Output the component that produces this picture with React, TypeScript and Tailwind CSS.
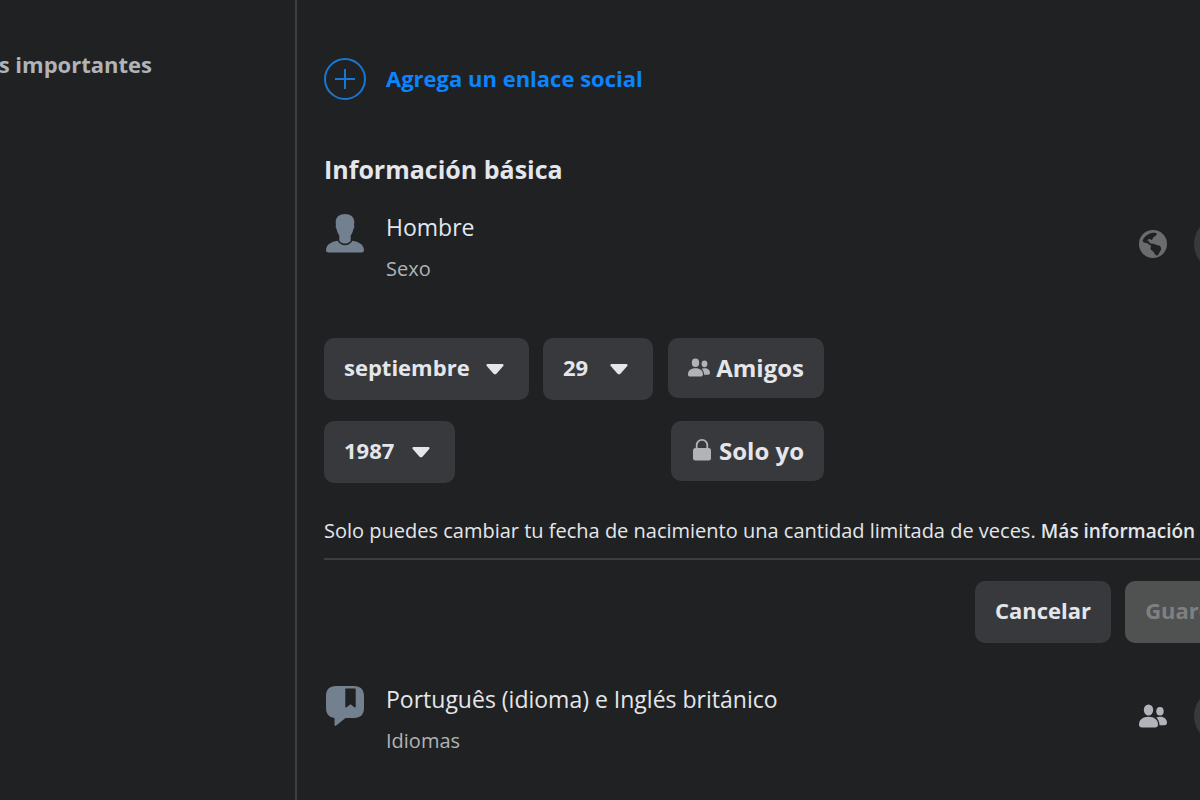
import type { ReactNode } from "react";

function Caret() {
  return (
    <svg
      viewBox="0 0 20 12"
      className="pointer-events-none absolute right-[25px] h-[11px] w-[18px] fill-[#e4e6eb]"
      aria-hidden="true"
    >
      <path d="M1.600 0h16.800c1.100 0 1.500 1.200.8 2l-7.600 8.600c-.9 1-2.300 1-3.200 0L.8 2C.1 1.200.5 0 1.600 0z" />
    </svg>
  );
}

function Picker({ label, value, width }: { label: string; value: string; width: string }) {
  return (
    <div className={`relative flex items-center ${width}`}>
      <select
        aria-label={label}
        defaultValue={value}
        className="h-[62px] w-full appearance-none rounded-[10px] bg-[#38393c] pb-1 pl-5 text-[22px] leading-8 font-bold text-[#e4e6eb]"
      >
        <option>{value}</option>
      </select>
      <Caret />
    </div>
  );
}

function FriendsIcon({ className }: { className: string }) {
  return (
    <svg viewBox="0 0 28 24" className={className} fill="currentColor" aria-hidden="true">
      <ellipse cx="9.500" cy="6" rx="4.700" ry="5.500" />
      <ellipse cx="21" cy="7.300" rx="3.700" ry="4.300" />
      <path d="M0 20.500C0 16 3.500 12.800 9.500 12.800S19 16 19 20.500c0 1.900-1 2.900-3 2.900H3c-2 0-3-1-3-2.900z" />
      <path d="M17.300 13.600c1-.5 2.300-.8 3.800-.8 4.500 0 6.900 2.700 6.900 5.900 0 1.600-.9 2.500-2.500 2.500h-5c-.2-3.300-1.200-5.700-3.200-7.600z" />
    </svg>
  );
}

function LockIcon() {
  return (
    <svg viewBox="0 0 18 22" className="mb-0.5 h-[22px] w-[18px] text-[#b0b3b8]" fill="currentColor" aria-hidden="true">
      <path d="M3.700 10V6.200a5.300 5.300 0 0 1 10.600 0V10" fill="none" stroke="currentColor" strokeWidth="1.800" />
      <rect y="9" width="18" height="12.500" rx="2.500" />
    </svg>
  );
}

function GlobeIcon() {
  return (
    <svg viewBox="0 0 28 28" className="h-7 w-7" aria-hidden="true">
      <circle cx="14" cy="14" r="14" fill="#6b6c6e" />
      <path
        fill="#202122"
        d="M17.300 3.200c-2.600-.8-5.700-.4-8.300 1.200-2.700 1.600-4.700 3.900-5.500 6.400.6 1.700 2.300 2.300 4 2.200 1.300 0 1.700 1.500 3.200 1.900 1.500.3 1.700 1.100 1 2.400-.7 1.400.3 2.700 1.700 3.500 1.600.9 2 3.400 3.700 4.500 1.400.8 2.500-.9 3.100-2.400.6-1.400 1.800-2.200 1.900-4.200 0-2.300-1.500-3.300-3.400-3.400-1.700-.1-2.900-1.400-4.600-1.600-1.400-.2-1.700 0-2.900-.5-.8-.4-.7-1.600-1.800-1.900-.9-.2-1.100-1.300-.1-2 1-.7 2-.4 2.800.4.6.5 1.300.2 1.600-.9.300-1.200 1.200-1.900 2.300-2.500 1-.6 2.600-2.500 1.300-3.100z"
      />
    </svg>
  );
}

function PersonIcon() {
  return (
    <svg viewBox="0 0 38 39" className="h-[39px] w-[38px] fill-[#728090]" aria-hidden="true">
      <path d="M19 0c5.500 0 9.300 2.800 9.300 8.300 0 1.300-.1 2.300-.3 3.200.6.600.4 2.500-.7 3.800-.5 2.700-1.400 4.700-2.600 6.200v5.300c-1.300 1.900-3.300 2.800-5.700 2.800s-4.400-.9-5.700-2.800v-5.300c-1.200-1.500-2.100-3.500-2.600-6.200-1.100-1.300-1.300-3.200-.7-3.800-.2-.9-.3-1.900-.3-3.200C9.700 2.800 13.500 0 19 0z" />
      <path d="M11.700 26.700c1.500 2.900 4.200 4.500 7.300 4.500s5.800-1.600 7.300-4.500c6.700 1 11.200 3.600 11.700 9.300 0 1.600-.8 2.500-2.400 2.500H2.400C.8 38.500 0 37.600 0 36c.5-5.700 5-8.300 11.700-9.300z" />
    </svg>
  );
}

function LanguageIcon() {
  return (
    <svg viewBox="0 0 38 40" className="h-10 w-[38px]" aria-hidden="true">
      <path
        fill="#728090"
        d="M10 0h18c6.500 0 10 3.500 10 10v12c0 6.500-3.500 10-10 10h-8.500l-9.300 7.600c-.9.700-1.700.3-1.700-.8V31.900C3 31.200 0 28 0 22V10C0 3.500 3.500 0 10 0z"
      />
      <path fill="#202122" d="M19.300 2.500h10.400v18.200c0 .8-.7 1-1.300.5l-3.900-3-3.900 3c-.6.500-1.300.3-1.300-.5z" />
    </svg>
  );
}

function InfoRow({ icon, title, caption, audience }: { icon: ReactNode; title: string; caption: string; audience: ReactNode }) {
  return (
    <div className="flex items-start">
      <div className="w-[62px] pt-[3px] pl-0.5">{icon}</div>
      <div className="flex-1">
        <p className="text-[23px] leading-8 text-[#e4e6eb]">{title}</p>
        <p className="mt-3.5 text-xl leading-6 text-[#b0b3b8]">{caption}</p>
      </div>
      <div className="flex h-[66px] items-center gap-[27px] pr-2">
        {audience}
        <button type="button" aria-label={`Editar ${caption}`} className="h-[54px] w-[54px] rounded-full bg-[#38393c]" />
      </div>
    </div>
  );
}

export default function App() {
  return (
    <div className="flex min-h-screen overflow-hidden bg-[#202122] font-['Open_Sans','Noto_Sans',sans-serif]">
      <aside className="flex w-[297px] shrink-0 overflow-hidden border-r-2 border-[#3d3e40] pt-12">
        <div className="flex w-[152px] justify-end">
          <a href="#acontecimientos" className="text-[22px] leading-8 font-bold whitespace-nowrap text-[#b0b3b8]">
            Acontecimientos importantes
          </a>
        </div>
      </aside>

      <main className="min-w-0 flex-1 overflow-hidden pt-[58px] pl-[27px]">
        <div className="-mr-14">
          <a href="#enlace" className="flex items-center gap-5 text-[22px] leading-8 font-bold text-[#0a84ff]">
            <svg viewBox="0 0 42 42" className="h-[42px] w-[42px]" fill="none" stroke="#1678d4" strokeWidth="2" aria-hidden="true">
              <circle cx="21" cy="21" r="20" />
              <path d="M21 11v20M11 21h20" />
            </svg>
            <span className="pb-0.5">Agrega un enlace social</span>
          </a>

          <h2 className="mt-[51px] text-[25px] leading-9 font-bold text-[#e4e6eb]">Información básica</h2>

          <div className="mt-6">
            <InfoRow icon={<PersonIcon />} title="Hombre" caption="Sexo" audience={<GlobeIcon />} />
          </div>

          <form className="mt-[57px]" onSubmit={(event) => event.preventDefault()}>
            <div className="flex w-[500px] flex-col gap-[21px]">
              <div className="flex items-start gap-[14px]">
                <Picker label="Mes" value="septiembre" width="w-[205px]" />
                <Picker label="Día" value="29" width="w-[110px]" />
                <button
                  type="button"
                  className="ml-auto flex h-[60px] items-center gap-1.5 rounded-[10px] bg-[#38393c] px-5 text-2xl leading-8 font-bold text-[#e4e6eb]"
                >
                  <FriendsIcon className="mb-0.5 h-[19px] w-[22px] text-[#b0b3b8]" />
                  Amigos
                </button>
              </div>
              <div className="flex items-start justify-between">
                <Picker label="Año" value="1987" width="w-[131px]" />
                <button
                  type="button"
                  className="flex h-[60px] items-center gap-2 rounded-[10px] bg-[#38393c] pr-5 pl-[22px] text-2xl leading-8 font-bold text-[#e4e6eb]"
                >
                  <LockIcon />
                  Solo yo
                </button>
              </div>
            </div>

            <p className="mt-8 text-xl leading-8 whitespace-nowrap text-[#e4e6eb]">
              Solo puedes cambiar tu fecha de nacimiento una cantidad limitada de veces.{" "}
              <a href="#mas" className="text-[19px] font-semibold">
                Más información
              </a>
            </p>

            <div className="mt-[11px] flex justify-end gap-[14px] border-t-2 border-[#3d3e40] pt-[21px]">
              <button type="button" className="h-[62px] rounded-[10px] bg-[#38393c] px-5 pb-1 text-[22px] leading-8 font-bold text-[#e4e6eb]">
                Cancelar
              </button>
              <button type="submit" disabled className="h-[62px] rounded-[10px] bg-[#505151] px-5 pb-1 text-[22px] leading-8 font-bold text-[#7e8082]">
                Guardar
              </button>
            </div>
          </form>

          <div className="mt-10">
            <InfoRow
              icon={<LanguageIcon />}
              title="Português (idioma) e Inglés británico"
              caption="Idiomas"
              audience={<FriendsIcon className="h-6 w-7 text-[#b0b3b8]" />}
            />
          </div>
        </div>
      </main>
    </div>
  );
}
